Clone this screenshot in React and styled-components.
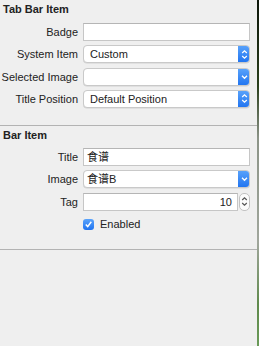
import styled, { createGlobalStyle } from "styled-components";

const GlobalStyle = createGlobalStyle`
  html, body { margin: 0; padding: 0; }
  body {
    background: #efefef;
    font-family: "Liberation Sans", "Noto Sans CJK SC", Arial, sans-serif;
    font-size: 11px;
    color: #222;
  }
`;

const Page = styled.div`
  display: flex;
  width: 259px;
  height: 346px;
  overflow: hidden;
`;

const Panel = styled.div`
  flex: 1;
  background: #efefef;
  display: flex;
  flex-direction: column;
`;

const Edge = styled.div`
  width: 2px;
  background: linear-gradient(
    to bottom,
    #0d160a 0%,
    #2a3f1c 25%,
    #8c9488 40%,
    #a0a69c 70%,
    #5f8a4c 88%,
    #6a9a58 100%
  );
`;

const Section = styled.div`
  padding: ${(p) => p.$top}px 7px ${(p) => p.$bottom}px 0;
  border-bottom: 1px solid #b3b3b3;
`;

const Header = styled.div`
  font-weight: bold;
  line-height: 14px;
  padding-left: 3px;
  margin-bottom: ${(p) => p.$gap}px;
`;

const Grid = styled.div`
  display: grid;
  grid-template-columns: 78px 1fr;
  column-gap: 5px;
  row-gap: ${(p) => p.$gap}px;
  align-items: center;
`;

const Label = styled.div`
  text-align: right;
  white-space: nowrap;
  line-height: 18px;
`;

const Field = styled.div`
  height: 18px;
  box-sizing: border-box;
  background: #fff;
  border: 1px solid #c6c6c6;
  border-top-color: #b5b5b5;
  padding: 0 3px;
  line-height: 16px;
  white-space: nowrap;
  text-align: ${(p) => (p.$right ? "right" : "left")};
  padding-right: ${(p) => (p.$right ? 5 : 3)}px;
`;

const Popup = styled.div`
  height: 18px;
  box-sizing: border-box;
  display: flex;
  background: #fff;
  border: 1px solid #c9c9c9;
  border-radius: 4px;
  box-shadow: 0 0.5px 0.5px rgba(0, 0, 0, 0.12);
  overflow: hidden;
`;

const PopupText = styled.div`
  flex: 1;
  line-height: 16px;
  padding-left: ${(p) => p.$pad}px;
  white-space: nowrap;
`;

const BlueButton = styled.div`
  width: 12px;
  margin: -1px -1px -1px 0;
  background: linear-gradient(to bottom, #5ba4fb, #1f73f0);
  border-radius: 0 4px 4px 0;
  display: flex;
  align-items: center;
  justify-content: center;
`;

const StepperRow = styled.div`
  display: flex;
  gap: 1px;
`;

const Stepper = styled.div`
  width: 11px;
  height: 18px;
  box-sizing: border-box;
  border: 1px solid #c2c2c2;
  border-radius: 5px;
  background: #fbfbfb;
  display: flex;
  align-items: center;
  justify-content: center;
`;

const CheckRow = styled.div`
  display: flex;
  align-items: center;
  gap: 6px;
  height: 18px;
`;

const Box = styled.div`
  width: 11px;
  height: 11px;
  border-radius: 3px;
  background: linear-gradient(to bottom, #5aa3fb, #1f73f0);
  display: flex;
  align-items: center;
  justify-content: center;
`;

const UpDown = ({ color = "#fff" }) => (
  <svg width="7" height="11" viewBox="0 0 7 11">
    <path d="M1.2 4 L3.5 1.8 L5.8 4" fill="none" stroke={color} strokeWidth="1.2" />
    <path d="M1.2 7 L3.5 9.2 L5.8 7" fill="none" stroke={color} strokeWidth="1.2" />
  </svg>
);

const Down = () => (
  <svg width="7" height="6" viewBox="0 0 7 6">
    <path d="M1 1.8 L3.5 4.3 L6 1.8" fill="none" stroke="#fff" strokeWidth="1.3" />
  </svg>
);

const PopupField = ({ text, single }) => (
  <Popup>
    <PopupText $pad={single ? 3 : 6}>{text}</PopupText>
    <BlueButton>{single ? <Down /> : <UpDown />}</BlueButton>
  </Popup>
);

export default function App() {
  return (
    <>
      <GlobalStyle />
      <Page>
        <Panel>
          <Section $top={2} $bottom={17}>
            <Header $gap={7}>Tab Bar Item</Header>
            <Grid $gap={4.3}>
              <Label>Badge</Label>
              <Field />
              <Label>System Item</Label>
              <PopupField text="Custom" />
              <Label>Selected Image</Label>
              <PopupField text="" single />
              <Label>Title Position</Label>
              <PopupField text="Default Position" />
            </Grid>
          </Section>
          <Section $top={2} $bottom={16}>
            <Header $gap={6}>Bar Item</Header>
            <Grid $gap={4.5}>
              <Label>Title</Label>
              <Field>食谱</Field>
              <Label>Image</Label>
              <PopupField text="食谱B" single />
              <Label>Tag</Label>
              <StepperRow>
                <Field $right style={{ flex: 1 }}>10</Field>
                <Stepper>
                  <UpDown color="#555" />
                </Stepper>
              </StepperRow>
              <div />
              <CheckRow>
                <Box>
                  <svg width="9" height="9" viewBox="0 0 9 9">
                    <path d="M1.8 4.6 L3.7 6.6 L7.3 1.8" fill="none" stroke="#fff" strokeWidth="1.5" />
                  </svg>
                </Box>
                Enabled
              </CheckRow>
            </Grid>
          </Section>
        </Panel>
        <Edge />
      </Page>
    </>
  );
}
